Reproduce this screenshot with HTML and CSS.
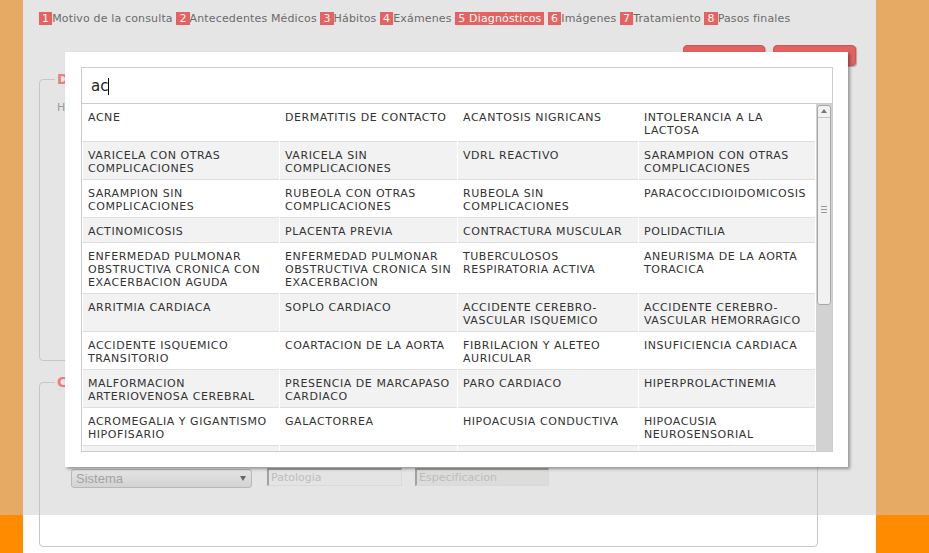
FILE: index.html
```html
<!DOCTYPE html>
<html lang="es">
<head>
<meta charset="utf-8">
<title>Diagnósticos</title>
<link rel="stylesheet" href="styles.css">
</head>
<body>
<div class="page">
  <main class="main">
    <nav class="steps"><span class="num">1</span>Motivo de la consulta <span class="num">2</span>Antecedentes Médicos <span class="num">3</span>Hábitos <span class="num">4</span>Exámenes <span class="num">5 Diagnósticos</span> <span class="num">6</span>Imágenes <span class="num">7</span>Tratamiento <span class="num">8</span>Pasos finales</nav>
    <div class="actions">
      <button class="btn">Anterior</button>
      <button class="btn">Siguiente</button>
    </div>
    <fieldset class="box box-first">
      <legend>Diagnósticos</legend>
      <div class="box-body first-body">Hallazgos del examen</div>
    </fieldset>
    <fieldset class="box box-second">
      <legend>CIE-10</legend>
      <div class="box-body second-body">
        <div class="filters">
          <div class="select"><span>Sistema</span><i class="arrow"></i></div>
          <input class="field" type="text" placeholder="Patologia">
          <input class="field field-off" type="text" placeholder="Especificacion">
        </div>
      </div>
    </fieldset>
  </main>

  <div class="modal">
    <div class="picker">
      <div class="search">ac<span class="caret"></span></div>
      <div class="results">
        <div class="list">
          <table>
            <colgroup><col class="c1"><col class="c2"><col class="c3"><col class="c4"></colgroup>
            <tbody>
              <tr><td>ACNE</td><td>DERMATITIS DE CONTACTO</td><td>ACANTOSIS NIGRICANS</td><td>INTOLERANCIA A LA LACTOSA</td></tr>
              <tr><td>VARICELA CON OTRAS COMPLICACIONES</td><td>VARICELA SIN COMPLICACIONES</td><td>VDRL REACTIVO</td><td>SARAMPION CON OTRAS COMPLICACIONES</td></tr>
              <tr><td>SARAMPION SIN COMPLICACIONES</td><td>RUBEOLA CON OTRAS COMPLICACIONES</td><td>RUBEOLA SIN COMPLICACIONES</td><td>PARACOCCIDIOIDOMICOSIS</td></tr>
              <tr><td>ACTINOMICOSIS</td><td>PLACENTA PREVIA</td><td>CONTRACTURA MUSCULAR</td><td>POLIDACTILIA</td></tr>
              <tr><td>ENFERMEDAD PULMONAR OBSTRUCTIVA CRONICA CON EXACERBACION AGUDA</td><td>ENFERMEDAD PULMONAR OBSTRUCTIVA CRONICA SIN EXACERBACION</td><td>TUBERCULOSOS RESPIRATORIA ACTIVA</td><td>ANEURISMA DE LA AORTA TORACICA</td></tr>
              <tr><td>ARRITMIA CARDIACA</td><td>SOPLO CARDIACO</td><td>ACCIDENTE CEREBRO-VASCULAR ISQUEMICO</td><td>ACCIDENTE CEREBRO-VASCULAR HEMORRAGICO</td></tr>
              <tr><td>ACCIDENTE ISQUEMICO TRANSITORIO</td><td>COARTACION DE LA AORTA</td><td>FIBRILACION Y ALETEO AURICULAR</td><td>INSUFICIENCIA CARDIACA</td></tr>
              <tr><td>MALFORMACION ARTERIOVENOSA CEREBRAL</td><td>PRESENCIA DE MARCAPASO CARDIACO</td><td>PARO CARDIACO</td><td>HIPERPROLACTINEMIA</td></tr>
              <tr><td>ACROMEGALIA Y GIGANTISMO HIPOFISARIO</td><td>GALACTORREA</td><td>HIPOACUSIA CONDUCTIVA</td><td>HIPOACUSIA NEUROSENSORIAL</td></tr>
              <tr><td>&nbsp;</td><td>&nbsp;</td><td>&nbsp;</td><td>&nbsp;</td></tr>
            </tbody>
          </table>
        </div>
        <div class="scrollbar">
          <div class="thumb">
            <div class="sb-up"><i class="up"></i></div>
            <div class="grip"><i></i><i></i><i></i></div>
          </div>
        </div>
      </div>
    </div>
  </div>
</div>
</body>
</html>
```

FILE: styles.css
```css
* {
  box-sizing: border-box;
}

html,
body {
  margin: 0;
  height: 100%;
}

body {
  font-family: "DejaVu Sans", Verdana, sans-serif;
  font-size: 11px;
  color: #333;
  overflow: hidden;
  background: linear-gradient(#e6aa64 0, #e6aa64 515px, #ff8c00 515px);
}

.page {
  position: relative;
  width: 929px;
  height: 553px;
  display: flex;
}

.main {
  margin-left: 23px;
  width: 853px;
  height: 553px;
  padding: 12px 20px 0 16px;
  background: linear-gradient(#e5e5e5 0, #e5e5e5 515px, #fff 515px);
}

/* steps */
.steps {
  line-height: 13px;
  color: #6b6b6b;
  white-space: nowrap;
  letter-spacing: 0.15px;
}

.num {
  background: #e8615f;
  color: #fff;
  padding: 0 3px;
}

/* top buttons */
.actions {
  display: flex;
  justify-content: flex-end;
  gap: 8px;
  margin-top: 20px;
}

.btn {
  width: 82px;
  height: 21px;
  padding: 6px 0 0;
  border: 1px solid #c95757;
  border-radius: 4px;
  background: #e06262;
  color: #fff;
  font: 11px/13px "DejaVu Sans", Verdana, sans-serif;
  box-shadow: 1px 1px 1px rgba(120, 40, 40, 0.35);
}

.btn + .btn {
  width: 83px;
}

/* fieldsets */
.box {
  width: 779px;
  margin: 4px 0 0;
  padding: 0 16px 0 15px;
  border: 1px solid #c6c6c6;
  border-radius: 4px;
  min-width: 0;
}

.box legend {
  padding: 0 2px;
  font-size: 14px;
  font-weight: bold;
  line-height: 18px;
  color: #e6807c;
}

.box-second {
  margin-top: 12px;
}

.box-body {
  padding-left: 2px;
}

.first-body {
  height: 272px;
  padding-top: 13px;
  color: #9a9a9a;
}

.second-body {
  height: 155px;
  padding-top: 78px;
}

.filters {
  display: flex;
  align-items: flex-start;
  margin-left: 14px;
}

.select {
  width: 181px;
  height: 19px;
  border: 1px solid #b8b8b8;
  border-radius: 3px;
  background: linear-gradient(#e4e4e4, #d3d3d3);
  display: flex;
  align-items: center;
  justify-content: space-between;
  padding: 0 5px 0 4px;
  font: 13px "Liberation Sans", Arial, sans-serif;
  color: #a3a3a3;
}

.arrow {
  width: 0;
  height: 0;
  border-left: 3px solid transparent;
  border-right: 3px solid transparent;
  border-top: 5px solid #666;
}

.field {
  width: 135px;
  height: 18px;
  margin: -1px 0 0 15px;
  padding: 0 2px;
  border-style: solid;
  border-width: 2px 1px 1px 2px;
  border-color: #a2a2a2 #dadada #dadada #a2a2a2;
  background: #e4e4e4;
  font: 11px "DejaVu Sans", Verdana, sans-serif;
  color: #555;
  outline: none;
}

.field::placeholder {
  color: #bdbdbd;
}

.field-off {
  width: 134px;
  margin-left: 13px;
  background: #dcdcda;
}

/* modal */
.modal {
  position: absolute;
  left: 65px;
  top: 52px;
  width: 783px;
  height: 415px;
  padding: 15px 15px 15px 16px;
  background: #fff;
  box-shadow: 2px 2px 3px rgba(0, 0, 0, 0.35);
}

.picker {
  height: 100%;
  border: 1px solid #cccccc;
  display: flex;
  flex-direction: column;
}

.search {
  flex: none;
  height: 36px;
  border-bottom: 1px solid #cccccc;
  padding-left: 9px;
  font-size: 15px;
  line-height: 36px;
  color: #222;
}

.caret {
  display: inline-block;
  width: 1px;
  height: 17px;
  margin-left: 0;
  background: #000;
  vertical-align: -4px;
}

.results {
  flex: 1;
  min-height: 0;
  display: flex;
}

.list {
  flex: 1;
  min-width: 0;
  overflow: hidden;
}

table {
  width: 100%;
  table-layout: fixed;
  border-collapse: separate;
  border-spacing: 1px 0;
}

.c1 { width: 196px; }
.c2 { width: 177px; }
.c3 { width: 180px; }
.c4 { width: 176px; }

td {
  vertical-align: top;
  padding: 7px 2px 4px 5px;
  line-height: 13px;
  letter-spacing: 0.55px;
  border-bottom: 1px solid #dedede;
  color: #333;
}

tr:nth-child(even) td {
  background: #f2f2f2;
}

/* fake scrollbar */
.scrollbar {
  flex: none;
  width: 16px;
  background: #d2d2d2;
  padding: 1px 1px 0 1px;
}

.thumb {
  height: 200px;
  border: 1px solid #a8a8a8;
  border-radius: 3px;
  background: #f1f1f1;
  display: flex;
  flex-direction: column;
  align-items: center;
}

.sb-up {
  width: 100%;
  height: 12px;
  border-bottom: 1px solid #c4c4c4;
  display: flex;
  justify-content: center;
  padding-top: 3px;
}

.up {
  width: 0;
  height: 0;
  border-left: 3px solid transparent;
  border-right: 3px solid transparent;
  border-bottom: 4px solid #777;
}

.grip {
  margin-top: 88px;
  display: flex;
  flex-direction: column;
  gap: 2px;
}

.grip i {
  display: block;
  width: 6px;
  height: 1px;
  background: #9a9a9a;
}
```
